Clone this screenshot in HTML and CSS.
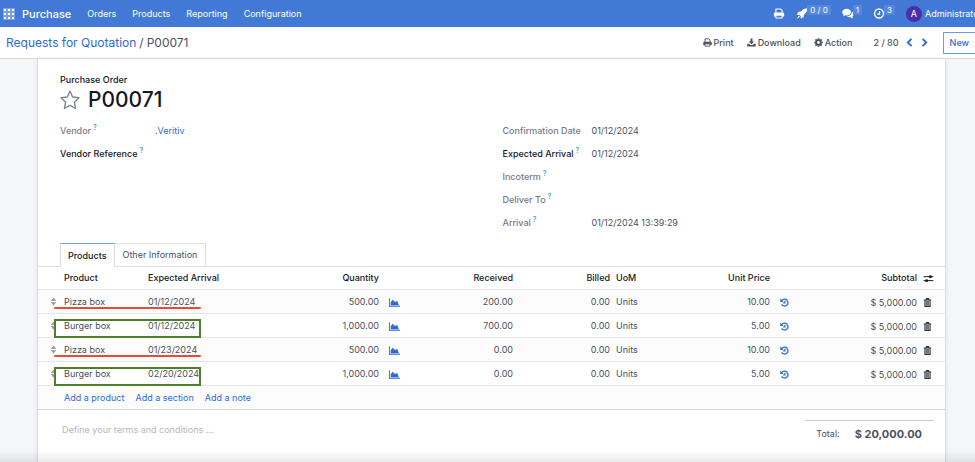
FILE: index.html
```html
<!DOCTYPE html>
<html lang="en">
<head>
  <meta charset="UTF-8" />
  <meta name="viewport" content="width=device-width, initial-scale=1.0" />
  <title>P00071 - Purchase</title>
  <link rel="stylesheet" href="styles.css">
</head>
<body>
  <svg class="sprite" aria-hidden="true">
    <symbol id="i-print" viewBox="0 0 16 16">
      <path fill="none" stroke="currentColor" stroke-width="1.6" stroke-linejoin="round" d="M3.5 8V1.5h7l2 2V8M3.5 14.5v-4h9v4z" />
      <path fill="currentColor" d="M2.5 6.5h11A2 2 0 0 1 15.5 8.5v4h-3v-2.5h-9v2.5h-3v-4a2 2 0 0 1 2-2z" />
    </symbol>
    <symbol id="i-rocket" viewBox="0 0 16 16">
      <path fill="currentColor" d="M15.800.2C12 .2 9 1.700 6.500 5L3 5.500.2 9.800l4 .2 1.800 1.800.2 4 4.300-2.800.5-3.500C14.300 7 15.800 4 15.800.2zM3.300 11L.5 15.500 5 12.700z" />
    </symbol>
    <symbol id="i-comments" viewBox="0 0 18 16">
      <path fill="currentColor" d="M7 1c3.600 0 6.500 2.200 6.500 5S10.600 11 7 11c-.6 0-1.200-.1-1.800-.2C4.200 11.500 3 12 1.500 12.200c.6-.7 1-1.400 1.100-2.300C1.200 9 .5 7.600.5 6c0-2.800 2.900-5 6.500-5z" />
      <path fill="currentColor" d="M14.800 5.500c1.700.8 2.800 2.100 2.800 3.700 0 1.300-.7 2.500-2 3.300.1.900.5 1.700 1.100 2.500-1.500-.2-2.700-.8-3.700-1.500-2.200.4-4.500-.1-5.900-1.300 4.300 0 7.700-2.500 7.700-6.700z" />
    </symbol>
    <symbol id="i-clock" viewBox="0 0 16 16">
      <circle cx="8" cy="8" r="6.500" fill="none" stroke="currentColor" stroke-width="2" />
      <path fill="none" stroke="currentColor" stroke-width="1.700" d="M8.800 4.200v4.800H5.500" />
    </symbol>
    <symbol id="i-download" viewBox="0 0 16 16">
      <path fill="currentColor" d="M6.200 1h3.600v5H13L8 11 3 6h3.200zM.5 10h3.200L6 12.300h4L12.300 10h3.200v5H.5z" />
    </symbol>
    <symbol id="i-gear" viewBox="0 0 16 16">
      <circle cx="8" cy="8" r="4.200" fill="none" stroke="currentColor" stroke-width="3.400" />
      <path fill="none" stroke="currentColor" stroke-width="3" d="M8 .4v3M8 12.600v3M.4 8h3M12.600 8h3M2.600 2.600l2.100 2.100M11.300 11.300l2.100 2.100M2.600 13.400l2.100-2.100M11.300 4.700l2.100-2.100" />
    </symbol>
    <symbol id="i-left" viewBox="0 0 16 16">
      <path fill="none" stroke="currentColor" stroke-width="3.400" d="M11.500 1.500L5 8l6.500 6.500" />
    </symbol>
    <symbol id="i-right" viewBox="0 0 16 16">
      <path fill="none" stroke="currentColor" stroke-width="3.400" d="M4.500 1.500L11 8l-6.500 6.500" />
    </symbol>
    <symbol id="i-star" viewBox="0 0 20 20">
      <path fill="none" stroke="currentColor" stroke-width="1.400" stroke-linejoin="round" d="M10 1.200l2.700 5.800 6.300.8-4.600 4.400 1.200 6.300-5.600-3.100-5.600 3.100 1.200-6.300L1 7.800 7.300 7z" />
    </symbol>
    <symbol id="i-sort" viewBox="0 0 8 12">
      <path fill="currentColor" d="M4 .5l3.800 4.700H.2zM4 11.500L.2 6.800h7.600z" />
    </symbol>
    <symbol id="i-chart" viewBox="0 0 18 14">
      <path fill="currentColor" d="M0 0h1.500v12.500H18V14H0zM2.800 11.500V6.500L6 2.500l3.500 3.500L13.500 4.500l2.700 7z" />
    </symbol>
    <symbol id="i-history" viewBox="0 0 16 16">
      <path fill="none" stroke="currentColor" stroke-width="2.200" d="M3 4.500a6.200 6.200 0 1 1-.2 6.800M8.800 4.800v4H5.800" />
      <path fill="currentColor" d="M.4 1v6h6z" />
    </symbol>
    <symbol id="i-trash" viewBox="0 0 14 16">
      <path fill="none" stroke="currentColor" stroke-width="2" d="M.5 3.500h13M4.500 3.500l.7-2.300h3.600l.7 2.300M2.500 3.500v11.300h9V3.500" />
      <path fill="none" stroke="currentColor" stroke-width="1.200" d="M5.200 5v8.500M7 5v8.500M8.800 5v8.500" />
    </symbol>
    <symbol id="i-sliders" viewBox="0 0 18 14">
      <path fill="none" stroke="currentColor" stroke-width="1.600" d="M1 4h16M1 10.500h16" />
      <circle cx="12" cy="4" r="2.400" fill="currentColor" />
      <circle cx="6" cy="10.500" r="2.400" fill="currentColor" />
    </symbol>
  </svg>

  <header class="navbar">
    <button class="apps" aria-label="Apps">
      <i></i><i></i><i></i><i></i><i></i><i></i><i></i><i></i><i></i>
    </button>
    <a class="brand" href="#">Purchase</a>
    <nav class="menu">
      <a href="#">Orders</a>
      <a href="#">Products</a>
      <a href="#">Reporting</a>
      <a href="#">Configuration</a>
    </nav>
    <div class="systray">
      <button aria-label="Printers"><svg class="icon tray"><use href="#i-print" /></svg></button>
      <button aria-label="Launches"><svg class="icon tray"><use href="#i-rocket" /></svg><span class="badge">0 / 0</span></button>
      <button aria-label="Messages"><svg class="icon tray"><use href="#i-comments" /></svg><span class="badge">1</span></button>
      <button aria-label="Activities"><svg class="icon tray"><use href="#i-clock" /></svg><span class="badge">3</span></button>
      <button class="user"><span class="avatar">A</span>Administrator</button>
    </div>
  </header>

  <div class="control-panel">
    <div class="breadcrumb"><a href="#">Requests for Quotation</a><span class="sep">/</span><span>P00071</span></div>
    <div class="actions">
      <button><svg class="icon"><use href="#i-print" /></svg>Print</button>
      <button><svg class="icon"><use href="#i-download" /></svg>Download</button>
      <button><svg class="icon"><use href="#i-gear" /></svg>Action</button>
    </div>
    <div class="pager">
      <span>2 / 80</span>
      <button aria-label="Previous"><svg class="icon"><use href="#i-left" /></svg></button>
      <button aria-label="Next"><svg class="icon"><use href="#i-right" /></svg></button>
    </div>
    <button class="btn-new">New</button>
  </div>

  <main class="content">
    <div class="sheet">
      <div class="title">
        <span class="title-label">Purchase Order</span>
        <h1><button aria-label="Priority"><svg class="star"><use href="#i-star" /></svg></button>P00071</h1>
      </div>

      <div class="groups">
        <dl class="group">
          <dt>Vendor<sup>?</sup></dt><dd><a href="#">.Veritiv</a></dd>
          <dt class="editable">Vendor Reference<sup>?</sup></dt><dd></dd>
        </dl>
        <dl class="group narrow">
          <dt>Confirmation Date</dt><dd>01/12/2024</dd>
          <dt class="editable">Expected Arrival<sup>?</sup></dt><dd>01/12/2024</dd>
          <dt>Incoterm<sup>?</sup></dt><dd></dd>
          <dt>Deliver To<sup>?</sup></dt><dd></dd>
          <dt>Arrival<sup>?</sup></dt><dd>01/12/2024 13:39:29</dd>
        </dl>
      </div>

      <div class="tabs" role="tablist">
        <button class="tab active" role="tab" aria-selected="true">Products</button>
        <button class="tab" role="tab" aria-selected="false">Other Information</button>
      </div>

      <table class="lines">
        <colgroup>
          <col class="c-handle"><col class="c-product"><col class="c-date"><col class="c-qty"><col class="c-icon"><col class="c-received"><col class="c-billed"><col class="c-uom"><col class="c-price"><col class="c-icon"><col class="c-subtotal"><col class="c-trash">
        </colgroup>
        <thead>
          <tr>
            <th></th>
            <th>Product</th>
            <th>Expected Arrival</th>
            <th class="num">Quantity</th>
            <th></th>
            <th class="num">Received</th>
            <th class="num">Billed</th>
            <th>UoM</th>
            <th class="num">Unit Price</th>
            <th></th>
            <th class="num">Subtotal</th>
            <th><button aria-label="Optional columns"><svg class="icon wide"><use href="#i-sliders" /></svg></button></th>
          </tr>
        </thead>
        <tbody>
          <tr>
            <td class="handle"><svg><use href="#i-sort" /></svg><span class="mark underline"></span></td>
            <td>Pizza box</td>
            <td>01/12/2024</td>
            <td class="num">500.00</td>
            <td><button class="blue" aria-label="Forecast"><svg class="icon wide"><use href="#i-chart" /></svg></button></td>
            <td class="num">200.00</td>
            <td class="num">0.00</td>
            <td>Units</td>
            <td class="num">10.00</td>
            <td><button class="blue" aria-label="Price history"><svg class="icon"><use href="#i-history" /></svg></button></td>
            <td class="num subtotal">$ 5,000.00</td>
            <td class="remove"><button aria-label="Delete"><svg class="icon"><use href="#i-trash" /></svg></button></td>
          </tr>
          <tr>
            <td class="handle"><svg><use href="#i-sort" /></svg><span class="mark box"></span></td>
            <td>Burger box</td>
            <td>01/12/2024</td>
            <td class="num">1,000.00</td>
            <td><button class="blue" aria-label="Forecast"><svg class="icon wide"><use href="#i-chart" /></svg></button></td>
            <td class="num">700.00</td>
            <td class="num">0.00</td>
            <td>Units</td>
            <td class="num">5.00</td>
            <td><button class="blue" aria-label="Price history"><svg class="icon"><use href="#i-history" /></svg></button></td>
            <td class="num subtotal">$ 5,000.00</td>
            <td class="remove"><button aria-label="Delete"><svg class="icon"><use href="#i-trash" /></svg></button></td>
          </tr>
          <tr>
            <td class="handle"><svg><use href="#i-sort" /></svg><span class="mark underline"></span></td>
            <td>Pizza box</td>
            <td>01/23/2024</td>
            <td class="num">500.00</td>
            <td><button class="blue" aria-label="Forecast"><svg class="icon wide"><use href="#i-chart" /></svg></button></td>
            <td class="num">0.00</td>
            <td class="num">0.00</td>
            <td>Units</td>
            <td class="num">10.00</td>
            <td><button class="blue" aria-label="Price history"><svg class="icon"><use href="#i-history" /></svg></button></td>
            <td class="num subtotal">$ 5,000.00</td>
            <td class="remove"><button aria-label="Delete"><svg class="icon"><use href="#i-trash" /></svg></button></td>
          </tr>
          <tr>
            <td class="handle"><svg><use href="#i-sort" /></svg><span class="mark box"></span></td>
            <td>Burger box</td>
            <td>02/20/2024</td>
            <td class="num">1,000.00</td>
            <td><button class="blue" aria-label="Forecast"><svg class="icon wide"><use href="#i-chart" /></svg></button></td>
            <td class="num">0.00</td>
            <td class="num">0.00</td>
            <td>Units</td>
            <td class="num">5.00</td>
            <td><button class="blue" aria-label="Price history"><svg class="icon"><use href="#i-history" /></svg></button></td>
            <td class="num subtotal">$ 5,000.00</td>
            <td class="remove"><button aria-label="Delete"><svg class="icon"><use href="#i-trash" /></svg></button></td>
          </tr>
          <tr class="add-row">
            <td></td>
            <td colspan="11"><a href="#">Add a product</a><a href="#">Add a section</a><a href="#">Add a note</a></td>
          </tr>
        </tbody>
      </table>

      <div class="summary">
        <textarea class="terms" rows="1" aria-label="Terms and conditions" placeholder="Define your terms and conditions ..."></textarea>
        <div class="total"><span>Total:</span><strong>$ 20,000.00</strong></div>
      </div>
    </div>
  </main>
</body>
</html>
```
FILE: styles.css
```css
* {
  box-sizing: border-box;
}
html,
body {
  height: 100%;
}
body {
  margin: 0;
  display: flex;
  flex-direction: column;
  overflow: hidden;
  background: #f5f6fa;
  color: #4b5160;
  font-family: Inter, "Liberation Sans", sans-serif;
  font-size: 9px;
  line-height: 12px;
}
a {
  color: #2c6bd8;
  text-decoration: none;
}
button {
  display: inline-flex;
  align-items: center;
  padding: 0;
  border: 0;
  background: none;
  color: inherit;
  font: inherit;
  cursor: pointer;
}
.sprite {
  position: absolute;
  width: 0;
  height: 0;
}
.icon {
  width: 9px;
  height: 9px;
  flex: none;
}
.icon.wide {
  width: 11px;
}
.icon.tray {
  width: 12px;
  height: 11px;
}
.blue {
  color: #2c6bd8;
}

/* top bar */
.navbar {
  display: flex;
  align-items: center;
  flex: none;
  height: 27px;
  padding-left: 4px;
  background: #4279d7;
  color: #fff;
  white-space: nowrap;
}
.navbar a {
  color: #fff;
}
.apps {
  display: grid;
  grid-template-columns: repeat(3, 2px);
  gap: 2px;
}
.apps i {
  width: 2px;
  height: 2px;
  outline: 1px solid rgba(255, 255, 255, 0.3);
  background: #fff;
}
.brand {
  margin-left: 8px;
  font-size: 11px;
  font-weight: 500;
}
.menu {
  display: flex;
  gap: 16px;
  margin-left: 16px;
}
.systray {
  display: flex;
  align-items: center;
  gap: 11px;
  margin-left: auto;
  margin-right: -7px;
}
.badge {
  align-self: flex-start;
  margin-top: -3px;
  margin-left: -1px;
  padding: 0 3px;
  background: #5488df;
  font-size: 8px;
  line-height: 10px;
}
.avatar {
  width: 16px;
  height: 16px;
  margin-right: 3px;
  border-radius: 50%;
  background: #4b2fa8;
  line-height: 16px;
  text-align: center;
}

/* breadcrumb, actions, pager */
.control-panel {
  display: flex;
  align-items: center;
  flex: none;
  height: 32px;
  padding-left: 6px;
  border-bottom: 1px solid #d9dbe0;
  background: #fff;
  font-weight: 500;
  white-space: nowrap;
}
.breadcrumb {
  font-size: 12px;
  font-weight: 400;
}
.sep {
  margin: 0 3px;
}
.actions {
  display: flex;
  gap: 13px;
  margin-left: auto;
}
.actions button {
  gap: 2px;
}
.pager {
  display: flex;
  align-items: center;
  gap: 6px;
  margin: 0 14px 0 21px;
}
.pager button {
  color: #2c6bd8;
}
.btn-new {
  height: 22px;
  margin-right: -1px;
  padding: 0 6px;
  border: 1px solid #6d9be8;
  color: #2c6bd8;
}

/* form sheet */
.content {
  flex: 1;
  min-height: 0;
  padding: 0 29px 0 37px;
}
.content::after {
  content: "";
  position: fixed;
  right: 0;
  bottom: 0;
  left: 0;
  height: 12px;
  background: linear-gradient(rgba(0, 0, 0, 0), rgba(0, 0, 0, 0.08));
}
.sheet {
  height: 100%;
  border: 1px solid #dcdee4;
  border-width: 0 1px;
  background: #fff;
  box-shadow: 0 0 4px rgba(60, 70, 100, 0.1);
}
.title {
  padding: 15px 22px 0;
}
.title-label {
  color: #15181e;
  font-weight: 500;
}
h1 {
  display: flex;
  align-items: center;
  gap: 8px;
  margin: 0;
  color: #15181e;
  font-size: 21px;
  font-weight: 500;
  line-height: 28px;
}
.star {
  width: 20px;
  height: 20px;
  color: #80848c;
}
.groups {
  display: grid;
  grid-template-columns: 1fr 1fr;
  padding: 5px 0 9px 22px;
}
.group {
  display: grid;
  grid-template-columns: 95px 1fr;
  grid-auto-rows: 23px;
  align-content: start;
  align-items: center;
  margin: 0;
}
.narrow {
  grid-template-columns: 89px 1fr;
}
dt {
  color: #777b84;
  font-weight: 500;
}
dd {
  margin: 0;
}
.editable {
  color: #15181e;
}
sup {
  margin-left: 2px;
  color: #3d9bd0;
  font-size: 7px;
  line-height: 1px;
}

/* notebook */
.tabs {
  display: flex;
  padding-left: 22px;
}
.tab {
  height: 23px;
  padding: 0 8px;
  border: 1px solid #dcdee4;
  border-bottom: 0;
  border-left: 0;
}
.tab.active {
  position: relative;
  z-index: 1;
  height: 24px;
  margin-bottom: -1px;
  padding: 0 7px;
  border-top-color: #6d9be8;
  border-left: 1px solid #dcdee4;
  background: #fff;
  color: #15181e;
  font-weight: 500;
}

/* order lines */
.lines {
  width: 100%;
  border-collapse: separate;
  border-spacing: 0;
  border-top: 1px solid #dcdee4;
  table-layout: fixed;
}
.c-handle { width: 23px; }
.c-product { width: 84px; }
.c-date { width: 107px; }
.c-qty { width: 130px; }
.c-icon { width: 32px; }
.c-received { width: 102px; }
.c-billed { width: 97px; }
.c-uom { width: 64px; }
.c-price { width: 96px; }
.c-subtotal { width: 115px; }
.c-trash { width: 25px; }
.lines th,
.lines td {
  height: 24px;
  padding: 0 3px;
  border-bottom: 1px solid #e6e7eb;
  text-align: left;
}
.lines th {
  height: 23px;
  color: #15181e;
  font-weight: 500;
}
.lines td button,
.lines th button {
  vertical-align: middle;
}
.lines td .blue {
  margin-left: 4px;
}
.lines .num {
  text-align: right;
}
.lines tbody tr:nth-child(odd) {
  background: #fcfcfc;
}
.lines .subtotal {
  padding-top: 2px;
}
.remove button {
  color: #2b2f38;
}
.lines .handle {
  position: relative;
  padding-left: 12px;
}
.handle svg {
  display: block;
  width: 7px;
  height: 9px;
  color: #9a9fa8;
}
.mark {
  position: absolute;
  z-index: 1;
  left: 16px;
  width: 147px;
}
.mark.underline {
  top: 17px;
  height: 2px;
  border-radius: 2px;
  background: #ea4b34;
}
.mark.box {
  top: 5px;
  height: 19px;
  border: 2px solid #4f7f2b;
}
.add-row a {
  margin-right: 11px;
}
.lines .add-row td {
  border-bottom-color: #d4d6dc;
}

.summary {
  display: flex;
  justify-content: space-between;
  align-items: flex-start;
  padding: 10px 11px 0 24px;
}
.terms {
  width: 50%;
  margin-top: 4px;
  padding: 0;
  border: 0;
  outline: 0;
  background: none;
  font: inherit;
  resize: none;
}
.terms::placeholder {
  color: #b4b7be;
}
.total {
  display: flex;
  align-items: center;
  gap: 15px;
  padding: 6px 12px 0 11px;
  border-top: 1px solid #c9cbd0;
}
.total strong {
  font-size: 11px;
  font-weight: 700;
  line-height: 14px;
}
```
